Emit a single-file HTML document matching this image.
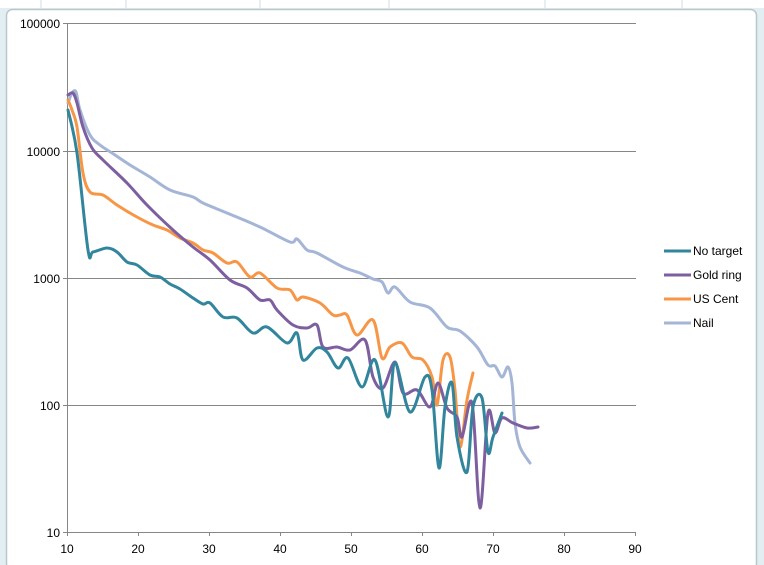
<!DOCTYPE html>
<html><head><meta charset="utf-8"><style>
html,body{margin:0;padding:0;background:#e2eef1;}
body{width:764px;height:565px;overflow:hidden;position:relative;font-family:"Liberation Sans",sans-serif;}
</style></head><body>
<svg width="764" height="565" viewBox="0 0 764 565" xmlns="http://www.w3.org/2000/svg" style="position:absolute;left:0;top:0">
<rect x="0" y="0" width="764" height="8" fill="#ffffff"/>
<g stroke="#cfdde3" stroke-width="1">
<line x1="41" y1="0" x2="41" y2="8"/><line x1="126" y1="0" x2="126" y2="8"/><line x1="260" y1="0" x2="260" y2="8"/><line x1="389" y1="0" x2="389" y2="8"/><line x1="545" y1="0" x2="545" y2="8"/><line x1="682" y1="0" x2="682" y2="8"/>
</g>
<rect x="6.5" y="9.5" width="750" height="560" rx="6" fill="#ffffff" stroke="#b9c7cc" stroke-width="1.5"/>
<g stroke="#868686" stroke-width="1">
<line x1="63" y1="23.5" x2="636" y2="23.5"/>
<line x1="63" y1="151.5" x2="636" y2="151.5"/>
<line x1="63" y1="278.5" x2="636" y2="278.5"/>
<line x1="63" y1="405.5" x2="636" y2="405.5"/>
<line x1="63" y1="532.5" x2="636" y2="532.5"/>
<line x1="67.5" y1="23" x2="67.5" y2="536"/>
<line x1="138.5" y1="532" x2="138.5" y2="536"/><line x1="209.5" y1="532" x2="209.5" y2="536"/><line x1="280.5" y1="532" x2="280.5" y2="536"/><line x1="351.5" y1="532" x2="351.5" y2="536"/><line x1="422.5" y1="532" x2="422.5" y2="536"/><line x1="493.5" y1="532" x2="493.5" y2="536"/><line x1="564.5" y1="532" x2="564.5" y2="536"/><line x1="635.5" y1="532" x2="635.5" y2="536"/>
</g>
<g font-size="12" fill="#000" text-anchor="end">
<text x="60" y="28">100000</text><text x="60" y="156">10000</text><text x="60" y="283">1000</text><text x="60" y="410">100</text><text x="60" y="537">10</text>
</g>
<g font-size="12" fill="#000" text-anchor="middle">
<text x="67" y="553">10</text><text x="138" y="553">20</text><text x="209" y="553">30</text><text x="280" y="553">40</text><text x="351" y="553">50</text><text x="422" y="553">60</text><text x="493" y="553">70</text><text x="564" y="553">80</text><text x="635" y="553">90</text>
</g>
<g fill="none" stroke-width="3" stroke-linejoin="round" stroke-linecap="round">
<path id="nail" stroke="#a4b5d6"/>
<path id="cent" stroke="#f79646"/>
<path id="gold" stroke="#7d5fa0"/>
<path id="none" stroke="#31859c"/>
</g>
<g stroke-width="3">
<line x1="664" y1="251" x2="691" y2="251" stroke="#31859c"/>
<line x1="664" y1="275" x2="691" y2="275" stroke="#7d5fa0"/>
<line x1="664" y1="299" x2="691" y2="299" stroke="#f79646"/>
<line x1="664" y1="323" x2="691" y2="323" stroke="#a4b5d6"/>
</g>
<g font-size="12" fill="#000">
<text x="693" y="255">No target</text><text x="693" y="279">Gold ring</text><text x="693" y="303">US Cent</text><text x="693" y="327">Nail</text>
</g>
</svg>
<script>
var D={
nail:[68,103,72,93,76,92,80,110,90,135,100,145,115,155,130,165,150,177,170,190,193,197,203,203,227,213,260,227,290,242,297,239,307,250,317,253,343,267,360,273,373,279,382,282,388,293,395,287,410,302,430,308,447,327,460,331,477,347,488,365,495,366,502,377,508,367,512,383,515,423,520,447,530,463],
cent:[68,100,72,110,77,127,83,173,90,192,103,195,117,205,137,217,153,225,167,230,180,238,193,243,203,250,213,253,227,263,237,262,250,277,260,273,277,288,290,290,297,300,303,297,320,303,333,315,340,315,347,315,357,335,373,320,382,358,390,347,402,343,412,357,423,360,432,377,437,405,443,360,450,357,455,390,460,447,467,400,473,373],
gold:[68,95,73,93,77,103,83,127,92,148,103,160,127,183,147,205,173,230,193,247,210,260,230,280,247,288,260,300,270,300,277,310,293,325,307,328,317,325,323,347,337,347,350,350,365,340,373,377,383,388,395,362,403,393,417,390,430,407,438,383,447,408,457,417,462,437,472,403,480,508,488,413,495,433,502,418,513,423,527,428,538,427],
none:[68,110,77,153,88,250,93,252,107,248,117,252,127,262,137,265,150,275,160,277,170,284,180,289,193,298,203,304,210,303,223,317,237,318,253,333,267,327,287,343,297,333,303,360,317,348,327,352,338,368,348,358,362,387,375,360,388,417,395,363,410,412,425,377,432,390,439,468,445,407,452,383,457,437,467,472,473,407,482,398,488,452,493,437,502,413]};
for(var k in D){var a=D[k],p=[];for(var i=0;i<a.length;i+=2)p.push([a[i],a[i+1]]);
var d="M"+p[0][0]+","+p[0][1];
for(var i=0;i<p.length-1;i++){var p0=p[i-1]||p[i],p1=p[i],p2=p[i+1],p3=p[i+2]||p2,t=6;
d+=" C"+(p1[0]+(p2[0]-p0[0])/t)+","+(p1[1]+(p2[1]-p0[1])/t)+" "+(p2[0]-(p3[0]-p1[0])/t)+","+(p2[1]-(p3[1]-p1[1])/t)+" "+p2[0]+","+p2[1];}
document.getElementById(k).setAttribute("d",d);}
</script>
</body></html>
